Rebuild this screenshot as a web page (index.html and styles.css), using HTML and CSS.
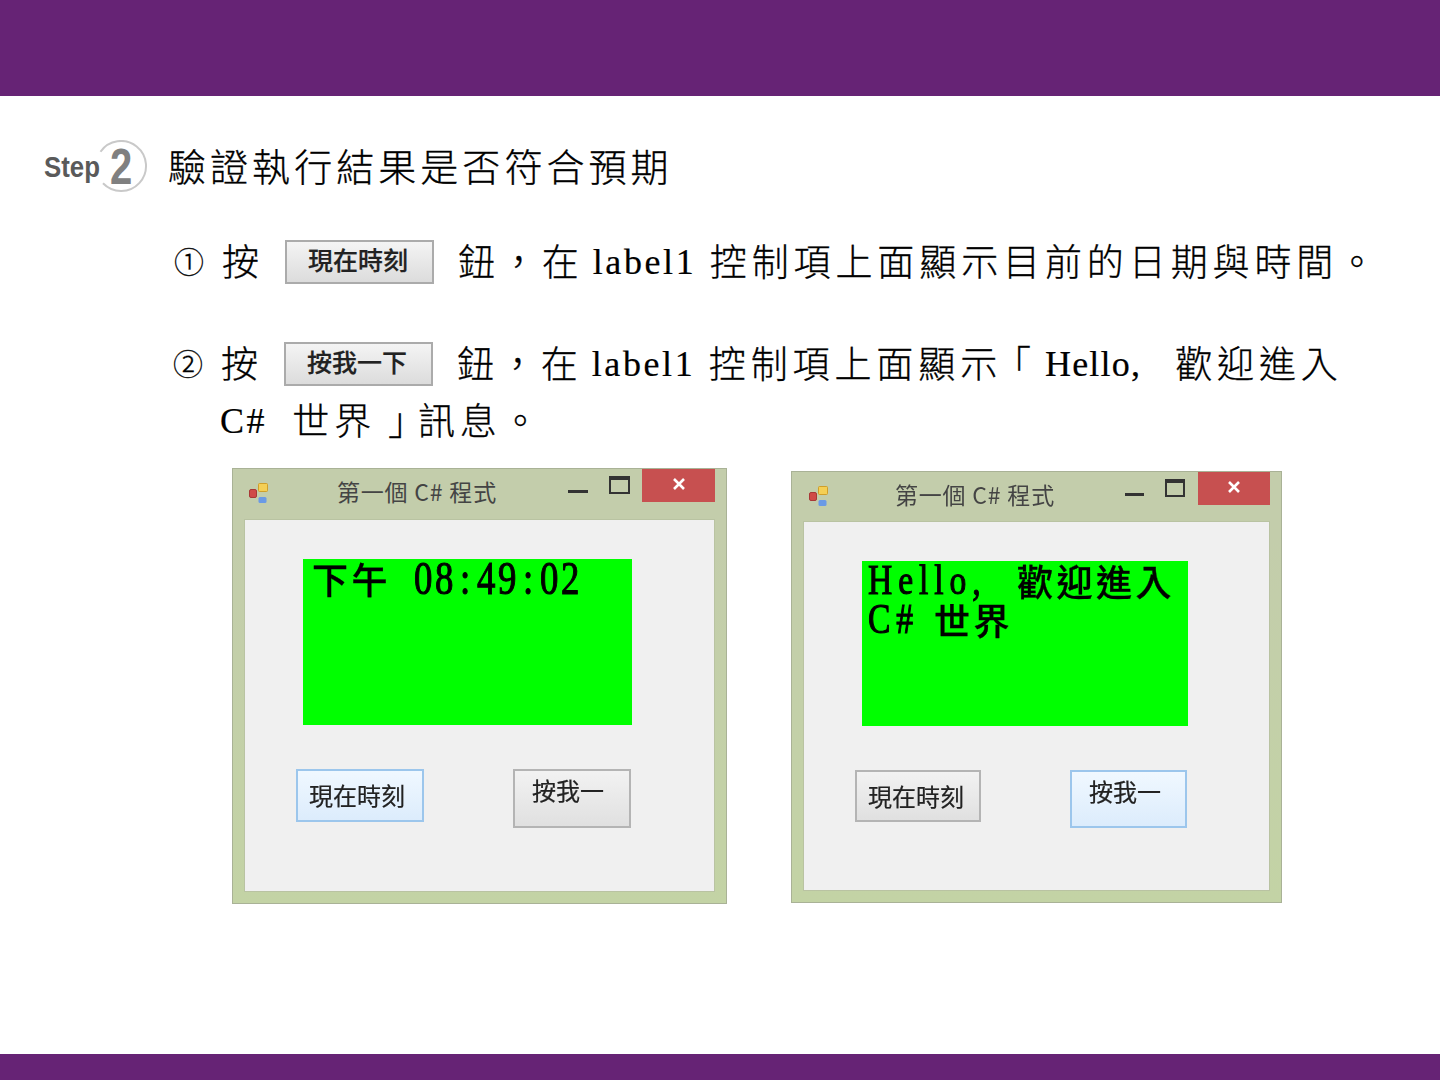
FILE: index.html
```html
<!DOCTYPE html>
<html lang="zh-Hant">
<head>
<meta charset="utf-8">
<title>驗證執行結果</title>
<link rel="stylesheet" href="styles.css">
</head>
<body>
<header class="band-top"></header>
<main class="slide">
  <section class="step-row">
    <div class="step-logo">
      <svg class="step-arc" width="104" height="54" viewBox="0 0 104 54" aria-hidden="true"><path d="M56.5 11.7A25 25 0 1 1 59 43.3" fill="none" stroke="#c9c9c9" stroke-width="2"/></svg>
      <span class="step-word">Step</span>
      <span class="step-num">2</span>
    </div>
    <h1 class="step-title">驗證執行結果是否符合預期</h1>
  </section>

  <div class="line line-1">
    <span class="mark">①</span>
    <span class="press">按</span>
    <span class="ref-btn">現在時刻</span>
    <span class="cjk after-btn">鈕，在</span>
    <span class="latin l-label">label1</span>
    <span class="cjk l-rest">控制項上面顯示目前的日期與時間。</span>
  </div>

  <div class="line line-2">
    <span class="mark">②</span>
    <span class="press">按</span>
    <span class="ref-btn">按我一下</span>
    <span class="cjk after-btn">鈕，在</span>
    <span class="latin l-label">label1</span>
    <span class="cjk l-rest">控制項上面顯<span class="pull">示</span>「</span>
    <span class="latin l-hello">Hello,</span>
    <span class="cjk l-welcome">歡迎進入</span>
  </div>

  <div class="line line-3">
    <span class="latin">C#</span>
    <span class="cjk l-world">世<span class="push">界</span><span class="tuck">」</span>訊息。</span>
  </div>

  <section class="windows">
    <article class="win win-a">
      <div class="titlebar">
        <svg class="app-icon" width="22" height="22" viewBox="0 0 22 22" aria-hidden="true"><rect x="0.5" y="6.5" width="7" height="8" rx="1.5" fill="#d04a48" stroke="#a83836"/><rect x="9.5" y="0.5" width="9" height="8" rx="1" fill="#f4cf55" stroke="#cf9f2a"/><rect x="9.5" y="14" width="8" height="6" rx="1.5" fill="#6a9ae6"/></svg>
        <span class="win-title">第一個 C# 程式</span>
        <span class="win-min"></span>
        <span class="win-max"></span>
        <span class="win-close"><svg width="14" height="12" viewBox="0 0 14 12" aria-hidden="true"><path d="M2 1l10 10M12 1L2 11" stroke="#fff" stroke-width="2.6" fill="none"/></svg></span>
      </div>
      <div class="client">
        <div class="label">
          <div class="label-row">
            <span class="big-cjk clock-cjk">下午</span>
            <span class="squeezed clock">08<i>:</i>49<i>:</i>02</span>
          </div>
        </div>
        <div class="buttons">
          <span class="form-btn btn-wide focused">現在時刻</span>
          <span class="form-btn btn-tall">按我一</span>
        </div>
      </div>
    </article>

    <article class="win win-b">
      <div class="titlebar">
        <svg class="app-icon" width="22" height="22" viewBox="0 0 22 22" aria-hidden="true"><rect x="0.5" y="6.5" width="7" height="8" rx="1.5" fill="#d04a48" stroke="#a83836"/><rect x="9.5" y="0.5" width="9" height="8" rx="1" fill="#f4cf55" stroke="#cf9f2a"/><rect x="9.5" y="14" width="8" height="6" rx="1.5" fill="#6a9ae6"/></svg>
        <span class="win-title">第一個 C# 程式</span>
        <span class="win-min"></span>
        <span class="win-max"></span>
        <span class="win-close"><svg width="14" height="12" viewBox="0 0 14 12" aria-hidden="true"><path d="M2 1l10 10M12 1L2 11" stroke="#fff" stroke-width="2.6" fill="none"/></svg></span>
      </div>
      <div class="client">
        <div class="label">
          <div class="label-row">
            <span class="squeezed hello w-hello">Hello,</span>
            <span class="big-cjk">歡迎進入</span>
          </div>
          <div class="label-row">
            <span class="squeezed hello w-csharp">C#</span>
            <span class="big-cjk">世界</span>
          </div>
        </div>
        <div class="buttons">
          <span class="form-btn btn-wide">現在時刻</span>
          <span class="form-btn btn-tall focused">按我一</span>
        </div>
      </div>
    </article>
  </section>
</main>
<footer class="band-bottom"></footer>
</body>
</html>
```

FILE: styles.css
```css
* { box-sizing: border-box; }
html, body { margin: 0; padding: 0; }
body {
  width: 1440px;
  height: 1080px;
  display: flex;
  flex-direction: column;
  overflow: hidden;
  background: #fff;
  color: #000;
  font-family: "Noto Sans CJK TC", "Liberation Sans", sans-serif;
}
.band-top { height: 96px; background: #662375; flex: none; }
.band-bottom { height: 26px; background: #662375; flex: none; }
.slide { flex: 1; min-height: 0; }

/* step heading */
.step-row {
  display: flex;
  align-items: center;
  height: 54px;
  margin-top: 44px;
  padding-left: 44px;
}
.step-logo {
  position: relative;
  width: 104px;
  height: 54px;
  flex: none;
  display: flex;
  align-items: center;
  font-family: "Liberation Sans", sans-serif;
  font-weight: 700;
}
.step-arc { position: absolute; left: 0; top: 0; }
.step-word { font-size: 29px; color: #5a5a5a; width: 66px; line-height: 54px; transform: scaleX(.89); transform-origin: left; }
.step-num { font-size: 50px; color: #808080; line-height: 54px; transform: scaleX(.8); transform-origin: left; }
.step-title {
  margin: 0 0 4px 20px;
  font-size: 38px;
  line-height: 50px;
  font-weight: 300;
  letter-spacing: 4.05px;
  white-space: nowrap;
  -webkit-text-stroke: .3px #000;
}

/* instruction lines */
.line {
  display: flex;
  align-items: center;
  padding-left: 174px;
  font-size: 37px;
  font-weight: 300;
  white-space: nowrap;
}
.line-1 { height: 44px; margin-top: 46px; }
.line-2 { height: 44px; margin-top: 58px; padding-left: 173px; }
.line-3 { height: 40px; margin-top: 15px; padding-left: 220px; }
.mark { width: 48px; font-size: 30px; margin-bottom: 4px; -webkit-text-stroke: .3px #000; }
.press { width: 63px; margin-bottom: 4px; -webkit-text-stroke: .3px #000; }
.ref-btn {
  width: 149px;
  height: 44px;
  flex: none;
  border: 2px solid #ababab;
  background: linear-gradient(#f4f4f4, #dcdcdc);
  padding-right: 3px;
  text-align: center;
  font-size: 25px;
  font-weight: 500;
  line-height: 34px;
  color: #222;
  -webkit-text-stroke: .2px #222;
}
.cjk { letter-spacing: 4.9px; margin-bottom: 4px; -webkit-text-stroke: .3px #000; }
.latin {
  font-family: "Liberation Serif", serif;
  font-size: 36px;
  letter-spacing: 2.6px;
  -webkit-text-stroke: .2px #000;
}
.after-btn { margin-left: 24px; }
.l-label { margin-left: 9px; }
.l-rest { margin-left: 13.5px; }
.pull { letter-spacing: -3.1px; }
.l-hello { margin-left: 9px; letter-spacing: 1.2px; }
.l-welcome { margin-left: 34px; }
.l-world { margin-left: 25px; }
.push { letter-spacing: 16.9px; }
.tuck { letter-spacing: -7.1px; }

/* WinForms windows */
.windows {
  display: flex;
  align-items: flex-start;
  gap: 64px;
  margin-top: 27px;
  padding-left: 232px;
  filter: blur(.5px);
}
.win {
  flex: none;
  border: 1px solid #a9b296;
  background: linear-gradient(#c3cdab 0, #c3cdab 15%, #c3d3a5 100%);
  padding: 0 11px 12px;
}
.win-a { width: 495px; height: 436px; }
.win-b { width: 491px; height: 432px; margin-top: 3px; }
.win-a .client { height: 373px; }
.win-b .client { height: 370px; }
.titlebar {
  display: flex;
  align-items: flex-start;
  height: 50px;
}
.win-b .titlebar { height: 49px; }
.app-icon { margin: 14px 0 0 5px; flex: none; }
.win-title {
  width: 166px;
  margin-left: 66px;
  font-size: 23px;
  line-height: 30px;
  padding-top: 7px;
  color: #444;
  letter-spacing: .8px;
  white-space: nowrap;
  flex: none;
  height: 40px;
}
.win-min { width: 20px; height: 3px; margin: 21px 0 0 65px; background: #333; flex: none; }
.win-max {
  width: 21px;
  height: 18px;
  margin: 7px 0 0 21px;
  border: 2px solid #333;
  border-top-width: 4px;
  flex: none;
}
.win-close {
  display: flex;
  align-items: center;
  justify-content: center;
  width: 73px;
  height: 33px;
  margin-left: 12px;
  background: #c75050;
  padding-bottom: 4px;
  flex: none;
}
.win-b .app-icon { margin-left: 6px; }
.win-b .win-title { margin-left: 64px; width: 165px; }
.win-b .win-min { margin-left: 65px; width: 19px; }
.win-b .win-max { margin-left: 21px; width: 20px; }
.win-b .win-close { width: 72px; margin-left: 13px; }

.client {
  border: 1px solid #b9c3a2;
  background: #f0f0f0;
  padding: 39px 0 0 58px;
}
.label {
  background: #0f0;
  color: #000;
}
.win-a .label { width: 329px; height: 166px; padding-left: 9px; }
.win-b .label { width: 326px; height: 165px; padding-left: 6px; }
.label-row {
  display: flex;
  align-items: center;
  height: 39px;
  white-space: nowrap;
}
.big-cjk {
  font-size: 36px;
  line-height: 39px;
  font-weight: 500;
  letter-spacing: 3.5px;
  -webkit-text-stroke: .3px #000;
}
.clock-cjk { width: 102px; flex: none; }
.squeezed {
  display: block;
  flex: none;
  font-family: "Liberation Serif", serif;
  line-height: 39px;
  transform: scaleX(.8);
  transform-origin: left center;
  -webkit-text-stroke: 1.1px #000;
}
.clock { font-size: 46px; letter-spacing: 3.3px; }
.clock i { font-style: normal; margin: 0 5px; }
.hello { font-size: 42px; letter-spacing: 7.4px; }
.w-hello { width: 149px; }
.w-csharp { width: 66px; }

.buttons { display: flex; align-items: flex-start; gap: 89px; margin: 44px 0 0 -7px; }
.form-btn {
  flex: none;
  border: 2px solid #b4b4b4;
  background: linear-gradient(#f2f2f2, #e0e0e0);
  color: #222;
  font-size: 24px;
  white-space: nowrap;
  -webkit-text-stroke: .2px #222;
}
.form-btn.focused {
  border-color: #9cc6ec;
  background: linear-gradient(#f0f8ff, #dcecfc);
}
.win-a .btn-wide { width: 128px; height: 53px; }
.win-b .btn-wide { width: 126px; height: 52px; }
.win-a .btn-tall { width: 118px; height: 59px; }
.win-b .btn-tall { width: 117px; height: 58px; }
.btn-wide { padding: 6px 0 0 11px; line-height: 36px; }
.btn-tall { padding: 1px 0 0 17px; line-height: 36px; }
```
